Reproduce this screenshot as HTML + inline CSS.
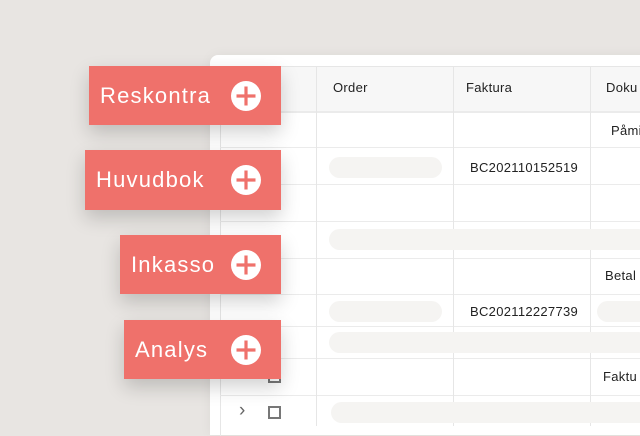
<!DOCTYPE html>
<html><head><meta charset="utf-8"><style>
*{margin:0;padding:0;box-sizing:border-box}
body{width:640px;height:426px;overflow:hidden;background:#e8e5e2;position:relative;font-family:"Liberation Sans",sans-serif}
.card{position:absolute;left:210px;top:55px;width:440px;height:380px;background:#fff;border-radius:8px 0 0 0;box-shadow:0 0 12px rgba(0,0,0,.05)}
.tbl{position:absolute;left:220px;top:66px;width:430px;height:370px;border-left:1px solid #e6e6e6;border-top:1px solid #e6e6e6}
.hd{position:absolute;left:221px;top:67px;width:420px;height:45px;background:#f7f7f7}
.h{position:absolute;left:220px;width:420px;height:2px;background:#ebebeb}
.v{position:absolute;top:66px;width:1px;height:360px;background:#e6e6e6}
.t{position:absolute;font-size:13px;color:#222;letter-spacing:.3px}
.p{position:absolute;height:21px;background:#f5f4f2;border-radius:11px}
.btn{position:absolute;background:#ef716b;color:#fff;font-size:22px;letter-spacing:1.2px;box-shadow:0 8px 18px rgba(0,0,0,.18);display:flex;align-items:center;padding-left:11px}
.btn svg{position:absolute;top:50%;margin-top:-15px}
.cb{position:absolute;width:13px;height:13px;border:2px solid #777}
.ch{position:absolute;font-size:19px;color:#666}
</style></head><body>
<div class="card"></div>
<div class="tbl"></div>
<div class="hd"></div>
<div class="h" style="top:111px"></div>
<div class="h" style="top:147px;height:1px"></div>
<div class="h" style="top:184px;height:1px"></div>
<div class="h" style="top:221px;height:1px"></div>
<div class="h" style="top:258px;height:1px"></div>
<div class="h" style="top:294px;height:1px"></div>
<div class="h" style="top:326px;height:1px"></div>
<div class="h" style="top:358px;height:1px"></div>
<div class="h" style="top:395px;height:1px"></div>
<div class="v" style="left:316px"></div>
<div class="v" style="left:453px"></div>
<div class="v" style="left:590px"></div>
<div class="t" style="left:333px;top:80px">Order</div>
<div class="t" style="left:466px;top:80px">Faktura</div>
<div class="t" style="left:606px;top:80px">Doku</div>
<div class="t" style="left:611px;top:123px">Påmi</div>
<div class="t" style="left:470px;top:160px">BC202110152519</div>
<div class="t" style="left:605px;top:268px">Betal</div>
<div class="t" style="left:470px;top:304px">BC202112227739</div>
<div class="t" style="left:603px;top:369px">Faktu</div>
<div class="p" style="left:329px;top:157px;width:113px"></div>
<div class="p" style="left:329px;top:229px;width:320px"></div>
<div class="p" style="left:329px;top:301px;width:113px"></div>
<div class="p" style="left:597px;top:301px;width:60px"></div>
<div class="p" style="left:329px;top:332px;width:320px"></div>
<div class="p" style="left:331px;top:402px;width:320px"></div>
<div class="ch" style="left:239px;top:364px">›</div>
<div class="cb" style="left:268px;top:370px"></div>
<div class="ch" style="left:239px;top:400px">›</div>
<div class="cb" style="left:268px;top:406px"></div>
<div class="btn" style="left:89px;top:66px;width:192px;height:59px">Reskontra<svg style="left:142px" width="30" height="30" viewBox="0 0 30 30"><circle cx="15" cy="15" r="15" fill="#fff"/><path d="M15 5.5v19M5.5 15h19" stroke="#ef716b" stroke-width="3.2"/></svg></div>
<div class="btn" style="left:85px;top:150px;width:196px;height:60px">Huvudbok<svg style="left:146px" width="30" height="30" viewBox="0 0 30 30"><circle cx="15" cy="15" r="15" fill="#fff"/><path d="M15 5.5v19M5.5 15h19" stroke="#ef716b" stroke-width="3.2"/></svg></div>
<div class="btn" style="left:120px;top:235px;width:161px;height:59px">Inkasso<svg style="left:111px" width="30" height="30" viewBox="0 0 30 30"><circle cx="15" cy="15" r="15" fill="#fff"/><path d="M15 5.5v19M5.5 15h19" stroke="#ef716b" stroke-width="3.2"/></svg></div>
<div class="btn" style="left:124px;top:320px;width:157px;height:59px">Analys<svg style="left:107px" width="30" height="30" viewBox="0 0 30 30"><circle cx="15" cy="15" r="15" fill="#fff"/><path d="M15 5.5v19M5.5 15h19" stroke="#ef716b" stroke-width="3.2"/></svg></div>
</body></html>
